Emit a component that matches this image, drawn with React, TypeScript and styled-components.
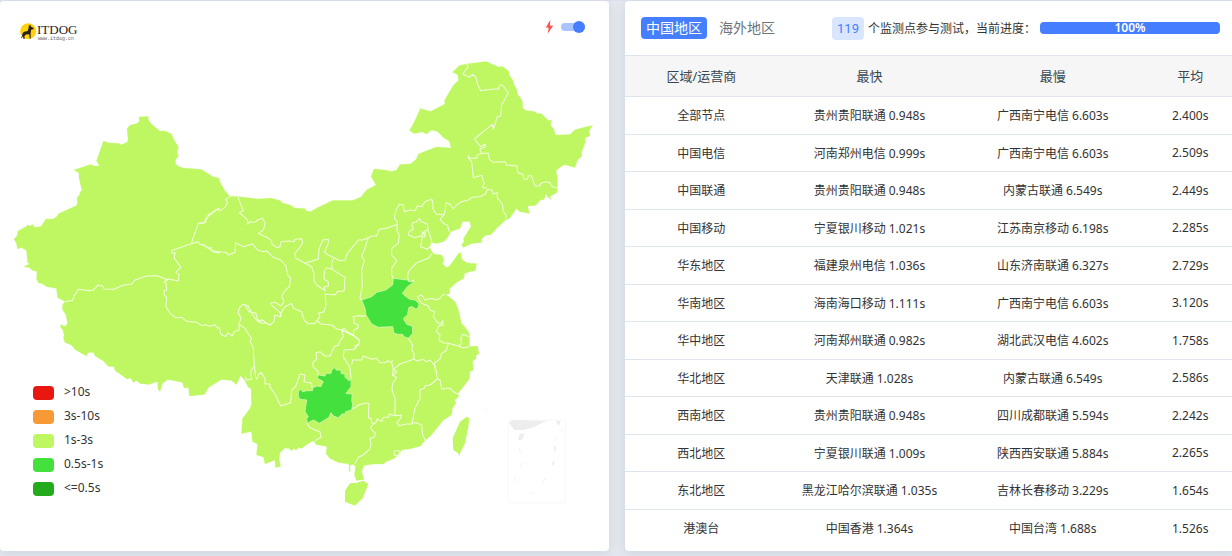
import React, { useState } from 'react';
import styled, { createGlobalStyle } from 'styled-components';

const GlobalStyle = createGlobalStyle`
  * { box-sizing: border-box; }
  body {
    margin: 0;
    background: #e5e9ef;
    color: #333;
    font-family: "Noto Sans", "Noto Sans CJK SC", sans-serif;
    font-size: 12px;
    overflow-x: hidden;
  }
`;

const Page = styled.main`
  display: grid;
  grid-template-columns: 609fr 611fr;
  gap: 16px;
  margin-right: -4px;
  padding-bottom: 5px;
  border-top: 1px solid #dde2ee;
`;

const Panel = styled.section`
  position: relative;
  min-width: 0;
  background: #fff;
  border-radius: 4px;
  box-shadow: 0 2px 12px rgba(100, 120, 150, 0.2);
`;

const MapDrawing = styled.svg`
  display: block;
  width: 100%;
`;

const Brand = styled.a`
  position: absolute;
  top: 19px;
  left: 19px;
  line-height: 0;
`;

const MapTools = styled.label`
  position: absolute;
  top: 19px;
  right: 24px;
  display: flex;
  align-items: center;
  gap: 7px;
`;

const Toggle = styled.input`
  appearance: none;
  position: relative;
  width: 24px;
  height: 8px;
  margin: 0;
  border-radius: 4px;
  background: #a9c4ff;
  cursor: pointer;

  &::before {
    content: "";
    position: absolute;
    top: -2px;
    left: 0;
    width: 12px;
    height: 12px;
    border-radius: 50%;
    background: #8ea0bd;
  }

  &:checked::before {
    left: 12px;
    background: #457fff;
  }
`;

const Legend = styled.ul`
  position: absolute;
  left: 33px;
  bottom: 52px;
  margin: 0;
  padding: 0;
  list-style: none;
`;

const LegendItem = styled.li`
  display: flex;
  align-items: center;
  gap: 10px;
  height: 24px;
`;

const Swatch = styled.span<{ $color: string }>`
  width: 21px;
  height: 14px;
  margin-top: 3px;
  border-radius: 4px;
  background: ${(p) => p.$color};
`;

const Toolbar = styled.header`
  display: flex;
  align-items: center;
  height: 54px;
  padding: 0 16px;
`;

const Tabs = styled.div`
  display: flex;
  flex: none;
  gap: 7px;
`;

const Tab = styled.button<{ $active: boolean }>`
  height: 22px;
  padding: 0 5px;
  border: 0;
  border-radius: 4px;
  background: ${(p) => (p.$active ? '#457fff' : 'transparent')};
  color: ${(p) => (p.$active ? '#fff' : '#6c757d')};
  font-family: inherit;
  font-size: 14px;
  line-height: 22px;
  cursor: pointer;
`;

const Progress = styled.div`
  display: flex;
  flex: none;
  align-items: center;
  gap: 4px;
  margin-left: auto;
  white-space: nowrap;
`;

const Count = styled.span`
  padding: 0 5px;
  border-radius: 4px;
  background: #dae5ff;
  color: #457fff;
  font-family: Roboto, sans-serif;
  font-size: 13px;
  line-height: 23px;
`;

const Bar = styled.div`
  width: 180px;
  height: 12px;
  border-radius: 4px;
  background: #457fff;
  color: #fff;
  font-weight: 600;
  line-height: 12px;
  text-align: center;
`;

const Results = styled.table`
  width: 100%;
  margin-bottom: 4px;
  border-collapse: separate;
  border-spacing: 0;
  table-layout: fixed;
  text-align: center;
`;

const Heading = styled.th<{ $share: number }>`
  width: ${(p) => p.$share}%;
  height: 42px;
  padding: 0 0 2px;
  border: solid #dee5ec;
  border-width: 1px 0;
  background: #f6f6f6;
  color: #36474f;
  font-size: 13px;
  font-weight: 400;
`;

const Row = styled.tr`
  height: 38px;

  &:nth-child(even) { height: 37px; }
  &:not(:last-child) > td { border-bottom: 1px solid #dee5ec; }
`;

const Cell = styled.td`
  padding: 0 0 1px;
`;

const COLORS = {
  slowest: '#e81710',
  slow: '#f79a35',
  medium: '#bef761',
  fast: '#43e03e',
  fastest: '#24aa1d',
};

const legend = [
  { color: COLORS.slowest, label: '>10s' },
  { color: COLORS.slow, label: '3s-10s' },
  { color: COLORS.medium, label: '1s-3s' },
  { color: COLORS.fast, label: '0.5s-1s' },
  { color: COLORS.fastest, label: '<=0.5s' },
];

const columns = [
  { title: '区域/运营商', share: 25 },
  { title: '最快', share: 30 },
  { title: '最慢', share: 30 },
  { title: '平均', share: 15 },
];

const rows = [
  ['全部节点', '贵州贵阳联通 0.948s', '广西南宁电信 6.603s', '2.400s'],
  ['中国电信', '河南郑州电信 0.999s', '广西南宁电信 6.603s', '2.509s'],
  ['中国联通', '贵州贵阳联通 0.948s', '内蒙古联通 6.549s', '2.449s'],
  ['中国移动', '宁夏银川移动 1.021s', '江苏南京移动 6.198s', '2.285s'],
  ['华东地区', '福建泉州电信 1.036s', '山东济南联通 6.327s', '2.729s'],
  ['华南地区', '海南海口移动 1.111s', '广西南宁电信 6.603s', '3.120s'],
  ['华中地区', '河南郑州联通 0.982s', '湖北武汉电信 4.602s', '1.758s'],
  ['华北地区', '天津联通 1.028s', '内蒙古联通 6.549s', '2.586s'],
  ['西南地区', '贵州贵阳联通 0.948s', '四川成都联通 5.594s', '2.242s'],
  ['西北地区', '宁夏银川联通 1.009s', '陕西西安联通 5.884s', '2.265s'],
  ['东北地区', '黑龙江哈尔滨联通 1.035s', '吉林长春移动 3.229s', '1.654s'],
  ['港澳台', '中国香港 1.364s', '中国台湾 1.688s', '1.526s'],
];

const MAINLAND =
  'M14,239 17,236 18,231 27,226 27,225 30,226 32.5,224.5 34.5,227.5 41,226.5 46,219 53,219 57,216.5 58,214 76.5,205.5 77.5,203 77,197.5 79.5,195 80,192 82,190.5 79,178 79,173 74,170 90.5,164.5 94.5,166 99.5,166 96.5,161 103.5,141 109,143 119.5,143.5 121,145 127.5,142 128,139 127,129 129.5,125.5 137,123.5 139.5,121 139,117 148.5,116.5 148,119 150,122.5 156,128 160,131 165,131 171.5,134 174,140 178.5,147 177,152.5 178.5,156 175.5,159.5 175.5,163.5 178.5,166.5 183.5,168 201.5,169.5 213.5,177 219,178 219.5,181 225,191 230,196.5 237.5,196.5 258,199 270.5,198 280,200.5 282.5,203 290,205 295,208 305,208.5 306,211 311,211.5 316,208.5 332.5,200.5 352.5,200.5 361,197 366.5,190 376,185 371,176.5 374,169 385,170 391.5,171.5 396.5,170 400,164.5 410.5,164 416,159.5 418.5,154 426,151 436.5,147 451,148 449.5,141.5 443.5,137.5 437.5,131.5 431.5,130 426.5,134 422.5,132 414,133.5 409.5,130.5 413.5,123.5 420.5,108.5 430.5,111.5 445,104 444.5,100.5 448.5,93.5 453.5,85 458.5,80.5 458,75 452.5,72 459.5,65.5 466.5,64 486,61.5 498.5,67 502.5,66.5 509,71.5 509,75 512.5,79.5 514,84.5 517,90 517.5,94.5 520,97 522.5,102 522.5,107.5 525.5,110.5 534.5,111.5 537,113.5 541,113.5 548.5,120.5 551.5,120 550.5,125 553.5,128.5 555.5,135 570,134.5 574.5,130 585,127 592.5,125.5 589,131 590,136 585.5,137.5 585,143 581.5,152.5 582,156 577.5,160 575,167.5 564,164.5 556,170.5 557.5,178.5 557,192.5 550,196.5 551.5,199.5 547.5,197 546,193.5 544,199.5 540.5,200 535.5,205.5 527.5,206 529.5,213.5 519.5,211.5 516.5,208.5 509.5,218.5 505.5,220 496.5,228.5 490.5,235 486,235 482,238.5 481.5,242.5 471.5,243.5 463.5,247.5 461.5,245 464,241.5 463.5,238.5 471,226.5 469.5,221.5 462.5,221.5 460,228.5 451,231.5 447.5,237.5 444,241.5 436.5,243.5 432.5,242.5 429.5,247.5 433.5,254 441.5,255 444,259.5 442.5,264 446.5,267.5 449.5,266 455,258.5 458.5,253.5 460.5,252.5 462,259.5 466.5,262.5 471.5,263.5 476.5,263.5 475.5,270.5 469,272 464.5,273.5 464,278 456.5,282.5 449.5,289 450,293.5 446,294.5 455,301.5 458.5,310 461.5,323.5 465,327 469.5,333.5 469.5,346.5 477.5,346 479,354 476,355 476,358.5 472.5,361.5 473.5,370 470,371.5 469.5,378.5 463.5,386.5 457.5,394 459,396.5 454.5,400 456,403 452.5,408 451.5,415 443.5,420 430,436.5 425,440.5 420.5,446 411.5,448.5 401.5,450 399,453.5 395,458 390.5,460 386.5,461.5 383.5,464 373.5,464 364,465.5 361.5,471.5 364,479.5 356.5,480.5 354.5,475 355.5,466.5 353.5,464.5 350,465 350,471.5 349,471.5 349,464 338.5,462.5 330,458.5 326,453.5 327,446.5 316,444.5 313.5,440.5 306,445 301.5,448.5 299,447.5 296,450 293.5,448.5 291,451 289.5,448.5 285,448 280,452.5 279,458.5 280.5,466.5 275.5,467.5 275,460 265,464 263.5,457 256.5,455 257.5,444 252.5,441.5 251.5,431.5 241.5,433.5 242.5,418.5 250,408.5 251.5,404 251,388.5 248,387 245,380.5 240.5,375.5 236.5,384.5 231.5,380.5 221.5,379.5 208.5,387.5 204.5,394.5 189.5,396 188.5,387.5 184,388 182.5,382.5 173.5,380.5 167.5,379.5 162.5,383.5 160,391.5 158,389 157.5,381.5 148.5,384.5 140,383.5 136.5,380.5 133.5,382.5 130.5,378 127,379 123.5,376.5 115,370.5 114,366.5 108.5,366.5 103.5,361 95,356 93.5,352.5 88,352.5 86.5,356 75,349.5 71.5,345 65,342.5 63.5,338.5 64,335 63,330 60.5,327 61,324.5 65,326.5 67.5,323.5 66,315 62.5,309.5 62.5,305 65,301.5 57.5,297.5 56.5,288.5 46.5,286.5 42,283.5 38.5,283 36.5,279 37,271.5 31.5,270 30.5,268 24,266.5 29.5,264 27.5,262 26.5,250.5 21.5,247.5 17.5,249 16.5,243.5Z';

// Provincial borders are kept in sheets, three drawing units to one map unit.
const borderSheets = [
  {
    name: 'xinjiang',
    x: 0,
    y: 100,
    d: 'M513,452 517,460 525,458 523,475 543,502 527,517 537,523 535,543 503,537 497,543 M660,325 652,328 640,337 620,353 612,368 595,370 580,412 574,430 M513,452 578,430 595,425 600,433 612,435 622,443 633,443 638,455 660,460',
  },
  {
    name: 'tibet',
    x: 40,
    y: 260,
    d: 'M75,125 98,121 102,108 115,88 150,92 160,90 175,75 188,78 193,87 222,88 248,76 275,72 285,60 320,48 350,47 372,55 382,60 372,66 378,70 380,90 372,92 373,105 380,112 378,140 390,160 408,173 425,172 440,184 470,187 485,197 495,194 510,199 525,194 533,205 538,203 542,222 557,230 563,218 577,228 582,215 597,210 597,192 603,175 595,160 597,145 608,133 625,138 635,160 648,178 658,187 665,178 680,190 690,195 M597,192 615,205 635,237 630,243 640,265 643,318 647,352 652,357 654,345 663,337 675,355 675,372 690,372 M643,318 632,333 635,358 620,360 616,350',
  },
  {
    name: 'northwest',
    x: 200,
    y: 170,
    d: 'M90,80 77,88 83,97 75,112 60,122 50,118 25,135 15,158 0,160 M113,80 130,122 118,128 143,150 143,162 150,155 165,157 172,150 188,145 195,160 190,180 175,190 205,205 215,212 215,222 232,233 240,230 243,215 268,213 282,215 285,208 305,206 308,218 297,235 285,250 287,264 315,280 355,267 357,237 368,210 385,208 385,220 373,247 385,255 402,263 420,272 435,270 440,255 445,247 475,210 488,210 505,203 515,198 530,198 537,178 560,175 580,167 592,163 M0,223 12,225 35,242 80,248 85,255 105,247 107,218 130,230 158,222 172,240 190,245 200,243 220,262 242,270 258,288 263,315 272,325 268,350 255,362 245,378 252,395 243,408 225,397 212,400 217,408 230,418 240,428 243,440 225,435 222,455 210,465 195,458 185,460 172,447 168,430 147,425 135,405 M243,440 243,428 255,410 275,400 280,415 305,425 312,450 325,462 345,460 352,452 362,462 395,465 410,477 427,480 432,475 442,485 460,495 462,480 475,473 475,465 462,460 462,445 458,440 475,437 498,438 M315,280 335,290 342,312 342,332 350,345 375,362 373,350 385,348 385,335 372,328 373,305 378,293 397,298 395,280 402,263 M397,298 435,322 433,362 412,365 405,375 375,372 378,405 372,425 355,430 360,440 345,460 M505,203 493,240 485,258 493,272 485,300 487,345 480,385 485,390 M592,163 590,180 598,195 595,220 575,235 575,255 590,272 575,295 575,315 580,325 M460,495 478,510 478,520 465,535',
  },
  {
    name: 'bohai',
    x: 340,
    y: 190,
    d: 'M172,103 172,95 163,85 168,60 178,43 190,45 193,65 210,60 225,62 232,48 245,50 255,35 275,27 280,45 278,55 288,72 312,75 300,88 315,103 322,105 328,125 M312,75 317,55 317,38 330,42 340,57 350,45 365,35 385,30 395,22 420,20 437,12 442,0 M238,85 243,95 250,97 262,103 265,120 255,122 255,140 240,138 225,143 205,135 207,125 220,118 215,105 220,97 228,97Z M262,118 270,135 275,155 272,168 262,178 242,170 245,155 248,125 256,135 M276,190 265,205 230,218 205,245 203,262 207,280 M207,280 222,270 M237,328 232,320 245,315 255,330 275,325 290,330 300,325 305,317 315,312 M237,328 245,340 265,348 270,360 283,365 280,378 290,395 302,402 308,392 310,405 295,408 290,425 300,435 297,450 310,458 325,460 355,468 365,460 362,447 368,433 388,440 M355,468 370,474 388,470 M325,460 318,483 305,490 300,507 282,520 283,525 290,550 M205,445 218,465 215,480 222,490 222,507 M160,538 180,522 200,515 222,507 230,513 250,508 258,515 270,510 283,525 M35,525 38,510 65,510 70,498 95,508 110,505 120,518 137,518 143,512 155,518 157,510 M155,518 160,538 170,545 157,558',
  },
  {
    name: 'northeast',
    x: 390,
    y: 50,
    d: 'M230,42 235,50 218,72 238,82 247,73 258,82 262,102 272,122 310,117 325,117 330,105 337,105 355,128 335,165 332,198 322,200 310,238 307,223 253,267 272,290 285,283 287,290 270,297 275,310 262,315 260,325 240,325 235,317 235,325 245,335 250,383 275,376 283,400 277,412 290,415 M275,310 295,310 298,328 310,337 345,335 350,345 380,348 385,370 398,372 402,387 412,388 415,377 424,377 435,408 450,407 453,400 467,395 480,398 487,410 500,413 M290,418 305,420 310,432 322,428 322,443 337,462 340,485 348,495 347,508',
  },
  {
    name: 'south',
    x: 230,
    y: 320,
    d: 'M120,192 120,202 135,222 152,258 182,248 185,210 197,200 210,162 225,165 222,185 245,190 246,205 M262,165 265,155 250,142 248,128 260,118 258,98 270,95 285,108 300,108 312,80 325,75 330,62 340,50 335,30 370,47 388,62 388,72 375,78 375,88 342,90 340,110 360,143 363,175 M340,115 345,118 362,148 M490,148 487,165 500,172 488,190 486,210 495,235 495,285 M365,268 380,260 385,255 405,250 417,250 415,295 423,295 425,310 437,308 442,297 455,305 460,292 475,292 478,282 495,287 515,285 510,298 500,308 508,317 530,312 547,312 547,305 555,265 570,235 570,210 583,205 585,197 600,195 622,177 M613,130 620,160 622,177 630,180 635,208 650,205 660,205 670,215 683,222 M547,308 558,308 575,315 578,345 587,362 M437,308 422,320 425,330 437,340 432,352 420,355 423,375 418,388 400,405 385,412 375,432 M230,310 240,323 255,330 270,335 273,352 255,362 M490,405 495,392 507,392 512,400 508,408 492,405',
  },
];

const HENAN =
  'M580,325 622,330 627,335 643,335 622,350 607,370 615,378 630,388 645,390 657,402 655,412 648,418 637,410 627,412 622,435 610,445 620,463 637,468 638,490 625,505 612,500 608,493 595,493 582,490 578,470 535,472 515,462 498,435 495,415 485,390 515,380 530,367 557,360 578,345Z';
const GUIZHOU =
  'M205,213 213,208 218,215 230,212 248,212 248,203 262,198 272,200 280,185 272,180 262,175 265,165 285,168 288,160 303,160 305,150 315,142 318,150 333,150 333,160 345,163 345,172 357,182 363,177 363,200 348,220 367,222 365,240 368,255 365,270 347,275 343,285 338,280 325,293 310,288 303,278 297,292 268,310 250,300 232,310 230,295 235,290 225,275 230,240 210,238 205,230Z';
const HAINAN = 'M360,490 380,488 400,482 415,492 398,535 375,557 345,545 345,512Z';
const TAIWAN = 'M710,290 718,295 715,320 705,370 690,400 688,410 685,400 670,390 668,355 690,305Z';

const UNIT = 1 / 3;

function sheet(x: number, y: number) {
  return `translate(${x} ${y}) scale(${UNIT})`;
}

function ChinaMap() {
  return (
    <MapDrawing viewBox="0 1 609 550" role="img" aria-label="中国地区">
      <path d={MAINLAND} fill={COLORS.medium} stroke={COLORS.medium} strokeWidth=".3" />
      <g fill={COLORS.medium}>
        <path d={HAINAN} transform={sheet(230, 320)} />
        <path d={TAIWAN} transform={sheet(230, 320)} />
      </g>
      <g fill="none" stroke="#f3fcdf" strokeWidth="3.2" strokeLinejoin="round">
        {borderSheets.map((s) => (
          <path key={s.name} d={s.d} transform={sheet(s.x, s.y)} />
        ))}
      </g>
      <g fill={COLORS.fast} stroke="#d5f8b0" strokeWidth="2.5" strokeLinejoin="round">
        <path d={HENAN} transform={sheet(200, 170)} />
        <path d={GUIZHOU} transform={sheet(230, 320)} />
      </g>
      <g transform={sheet(480, 400)}>
        <path d="M97,60 H256 V309 H85 V68Z" fill="none" stroke="#f8f8f8" strokeWidth="3" />
        <path
          d="M87,68 97,60 200,62 160,82 128,90 103,90Z M119,102 134,100 127,119 114,120Z M226,63 242,62 237,78Z M222,138 227,138 227,153 222,153Z M219,183 226,183 220,196 215,196Z M16,26 21,29 15,30Z"
          fill="#ededed"
        />
        <path
          d="M248,82 243,93 M230,112 225,120 M118,145 121,158 M130,187 119,202 M103,233 105,244 M196,235 187,249 M149,281 157,278"
          fill="none"
          stroke="#f0f0f0"
          strokeWidth="3"
        />
      </g>
    </MapDrawing>
  );
}

function Logo() {
  return (
    <svg width="60" height="22" viewBox="0 0 60 22" role="img" aria-label="ITDOG">
      <circle cx="9.2" cy="11.2" r="8" fill="#fdd20a" />
      <path
        d="M10 4.2 10.7 6 11.6 4.8 12 6.7 14.7 8.1 14.3 9.2 12.2 9.7 11.6 13 11.8 18.6 10.7 18.6 10.2 14.3 6.8 14.6 5.4 16.2 5.7 19 4.5 19 4 16 3 17.8 1.8 18.4 3 16 3.7 13 5.2 11.7 8.7 11 9.6 8Z"
        fill="#292018"
      />
      <text x="18" y="14" fontFamily="Liberation Serif, serif" fontSize="13" fill="#2b2422">ITDOG</text>
      <text x="19" y="20" fontFamily="Liberation Mono, monospace" fontSize="5" fill="#6b6664">
        www.itdog.cn
      </text>
    </svg>
  );
}

function Bolt() {
  return (
    <svg width="9" height="14" viewBox="0 0 9 14" aria-hidden="true">
      <path d="M5.3 0 .8 7.4 3.6 7.8 2.8 13.6 8.2 5.7 5 5.4Z" fill="#fb5551" />
    </svg>
  );
}

export default function App() {
  const [region, setRegion] = useState('中国地区');
  const [boost, setBoost] = useState(true);

  return (
    <>
      <GlobalStyle />
      <Page>
        <Panel>
          <ChinaMap />
          <Brand href="#" aria-label="ITDOG">
            <Logo />
          </Brand>
          <MapTools>
            <Bolt />
            <Toggle
              type="checkbox"
              role="switch"
              aria-label="加速"
              checked={boost}
              onChange={(e) => setBoost(e.target.checked)}
            />
          </MapTools>
          <Legend>
            {legend.map((item) => (
              <LegendItem key={item.label}>
                <Swatch $color={item.color} />
                {item.label}
              </LegendItem>
            ))}
          </Legend>
        </Panel>
        <Panel>
          <Toolbar>
            <Tabs role="tablist">
              {['中国地区', '海外地区'].map((name) => (
                <Tab
                  key={name}
                  type="button"
                  role="tab"
                  aria-selected={region === name}
                  $active={region === name}
                  onClick={() => setRegion(name)}
                >
                  {name}
                </Tab>
              ))}
            </Tabs>
            <Progress>
              <Count>119</Count>
              <span>个监测点参与测试，当前进度：</span>
              <Bar role="progressbar" aria-valuenow={100} aria-valuemin={0} aria-valuemax={100}>
                100%
              </Bar>
            </Progress>
          </Toolbar>
          <Results>
            <thead>
              <tr>
                {columns.map((c) => (
                  <Heading key={c.title} scope="col" $share={c.share}>
                    {c.title}
                  </Heading>
                ))}
              </tr>
            </thead>
            <tbody>
              {rows.map((cells) => (
                <Row key={cells[0]}>
                  {cells.map((text, i) => (
                    <Cell key={i}>{text}</Cell>
                  ))}
                </Row>
              ))}
            </tbody>
          </Results>
        </Panel>
      </Page>
    </>
  );
}
